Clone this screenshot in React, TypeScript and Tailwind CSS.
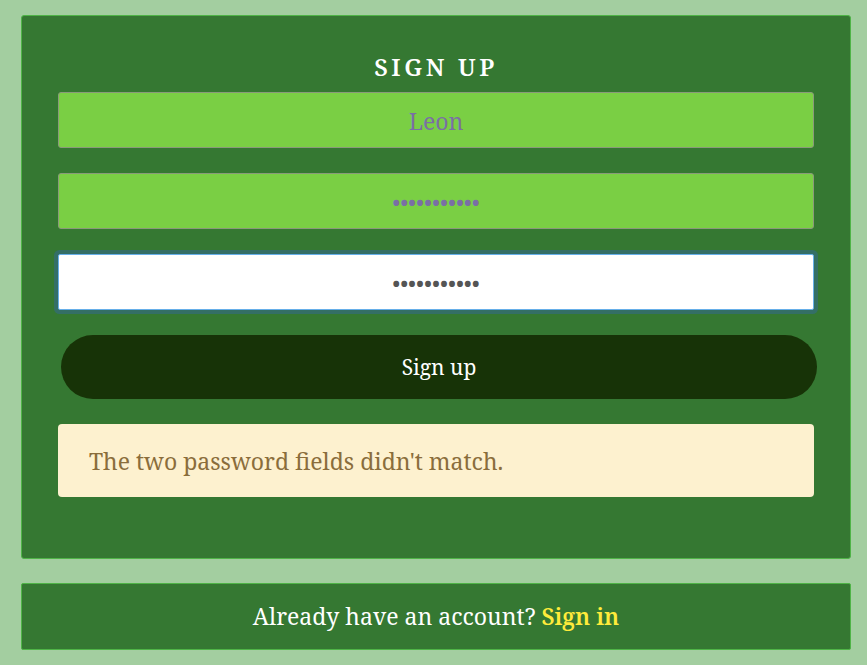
import React from 'react';

const serif = { fontFamily: '"Noto Serif", "DejaVu Serif", "Liberation Serif", serif' };

const App: React.FC = () => {
  return (
    <div className="min-h-[665px] w-full bg-[#a3cea0] pt-[15px]" style={serif}>
      <div className="ml-[21px] w-[830px] rounded-[3px] border border-[#4fb447] bg-[#357832] px-[36px] pt-[36px] pb-[61px]">
        <h1 className="text-center text-[24px] font-semibold leading-[29px] tracking-[0.15em] text-white">
          SIGN UP
        </h1>
        <form className="mt-[11px] flex flex-col gap-[25px]">
          <input
            type="text"
            defaultValue="Leon"
            readOnly
            className="h-[56px] w-full rounded-[3px] border border-[#8a9a7a] bg-[#7acf44] pt-[2px] text-center text-[23px] text-[#7a6fa5] outline-none"
            style={serif}
          />
          <input
            type="password"
            defaultValue="leonleon123"
            readOnly
            className="h-[56px] w-full rounded-[3px] border border-[#8a9a7a] bg-[#7acf44] pt-[1px] text-center text-[22px] text-[#7a6fa5] outline-none"
            style={serif}
          />
          <input
            type="password"
            defaultValue="leonleon124"
            readOnly
            className="h-[56px] w-full rounded-[2px] border border-[#66afe9] bg-white pt-[1px] text-center text-[22px] text-[#555555] shadow-[0_0_0_4px_#346f66] outline-none"
            style={serif}
          />
          <button
            type="button"
            className="ml-[3px] h-[64px] w-full rounded-full bg-[#173307] pt-[2px] text-[21px] text-white"
            style={serif}
          >
            Sign up
          </button>
          <div className="flex h-[73px] items-center rounded-[4px] bg-[#fdf1cf] pt-[2px] pl-[31px] text-[23px] text-[#8a6d3b]">
            The two password fields didn't match.
          </div>
        </form>
      </div>
      <div className="mt-[24px] ml-[21px] flex h-[67px] w-[830px] items-center justify-center rounded-[2px] border border-[#4fb447] bg-[#357832] text-[23px] text-white">
        <span>
          Already have an account?{' '}
          <a className="font-semibold text-[#ffeb3b]">Sign in</a>
        </span>
      </div>
    </div>
  );
};

export default App;
